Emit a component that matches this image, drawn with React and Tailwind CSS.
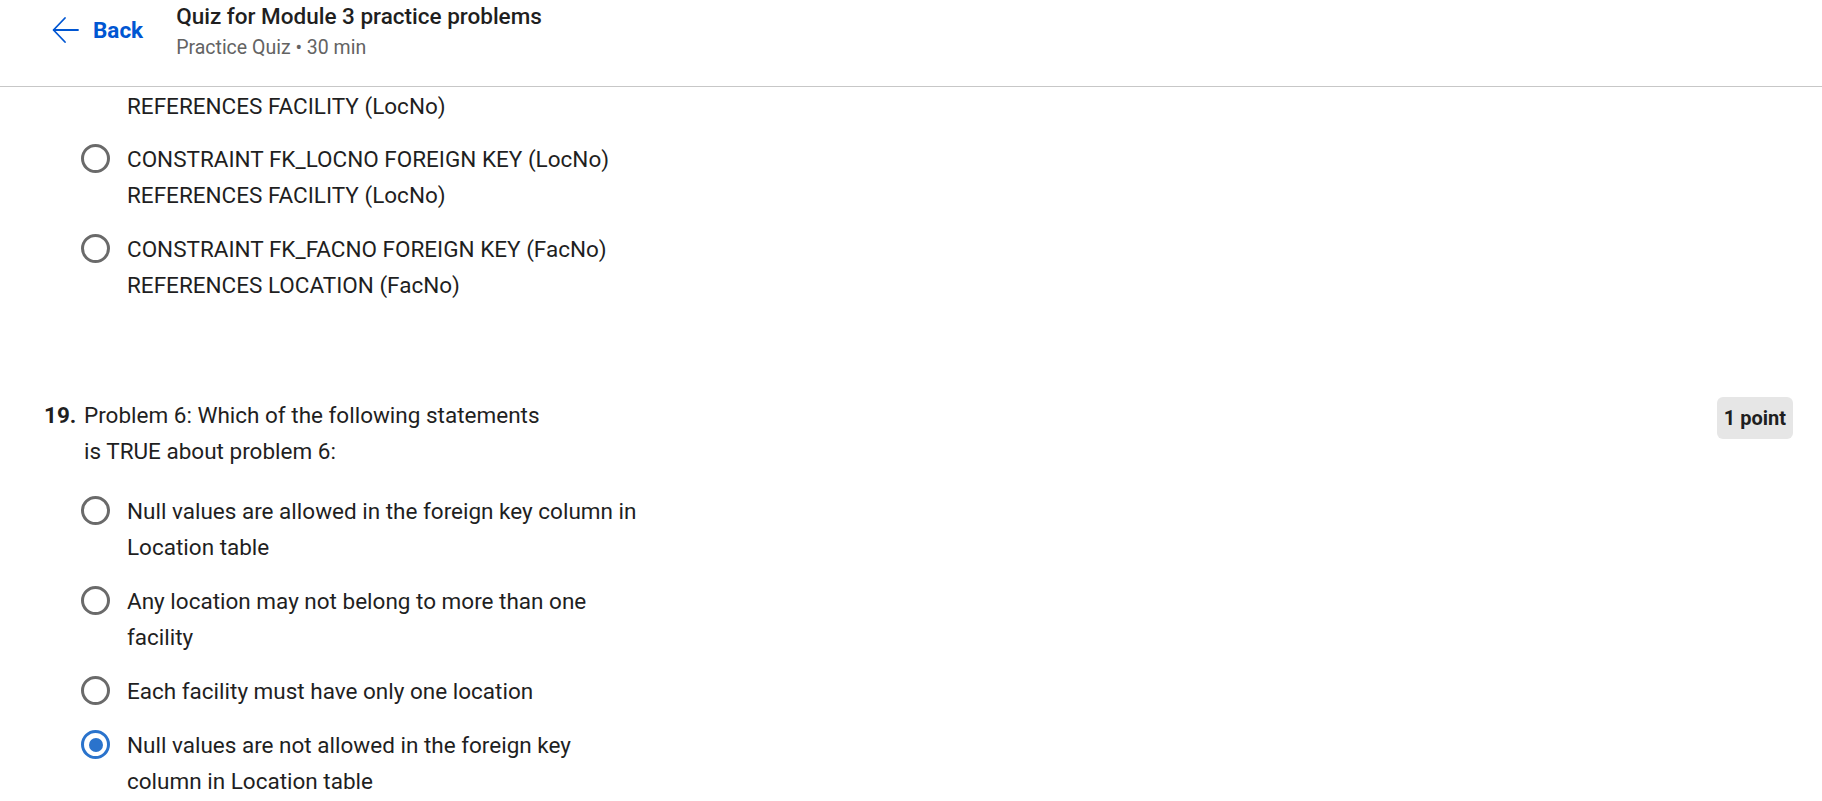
import React from 'react'

const Radio = ({ checked }) => (
  <div className='shrink-0 mt-[3px] size-[29px]'>
    {checked ? (
      <div className='size-[29px] rounded-full border-[3px] border-[#2a73cc] flex items-center justify-center'>
        <div className='size-[14px] rounded-full bg-[#2a73cc]' />
      </div>
    ) : (
      <div className='size-[29px] rounded-full border-[3px] border-[#6a6a6a]' />
    )}
  </div>
)

const Option = ({ lines, checked }) => (
  <div className='flex items-start pl-[81px] gap-[17px]'>
    <Radio checked={checked} />
    <div className='text-[22.5px] leading-[36px] text-[#1f1f1f] whitespace-nowrap'>
      {lines.map((l, i) => (
        <div key={i}>{l}</div>
      ))}
    </div>
  </div>
)

const prevOptions = [
  { lines: ['CONSTRAINT FK_LOCNO FOREIGN KEY (LocNo)', 'REFERENCES FACILITY (LocNo)'] },
  { lines: ['CONSTRAINT FK_FACNO FOREIGN KEY (FacNo)', 'REFERENCES LOCATION (FacNo)'] },
]

const options = [
  { lines: ['Null values are allowed in the foreign key column in', 'Location table'] },
  { lines: ['Any location may not belong to more than one', 'facility'] },
  { lines: ['Each facility must have only one location'] },
  { lines: ['Null values are not allowed in the foreign key', 'column in Location table'], checked: true },
]

export default function App() {
  return (
    <div className='w-full h-[801px] overflow-hidden bg-white text-[#1f1f1f] font-["Roboto","Noto_Sans",sans-serif]'>
      {/* header */}
      <header className='h-[87px] border-b border-[#c7c7c7] flex items-start'>
        <button className='flex items-center gap-[14px] ml-[52px] mt-[14px] h-[32px] text-[#0056d2]'>
          <svg width='27' height='30' viewBox='0 0 27 30' fill='none' stroke='currentColor' strokeWidth='1.8' strokeLinecap='round' strokeLinejoin='round'>
            <path d='M26 15H2' />
            <path d='M13 3L1.5 15L13 27' />
          </svg>
          <span className='text-[22.5px] font-bold leading-[32px]'>Back</span>
        </button>
        <div className='ml-[33px] flex flex-col'>
          <h1 className='text-[22.5px] font-medium leading-[32px] text-[#1f1f1f]'>Quiz for Module 3 practice problems</h1>
          <p className='text-[19.5px] leading-[32px] text-[#636363]'>Practice Quiz • 30 min</p>
        </div>
      </header>

      {/* tail of previous question */}
      <div className='pt-[1px]'>
        <div className='pl-[127px] text-[22.5px] leading-[36px] whitespace-nowrap'>REFERENCES FACILITY (LocNo)</div>
        <div className='flex flex-col gap-[18px] mt-[17px]'>
          {prevOptions.map((o, i) => (
            <Option key={i} lines={o.lines} />
          ))}
        </div>
      </div>

      {/* question 19 */}
      <section className='mt-[94px]'>
        <div className='flex items-start justify-between pl-[44px] pr-[29px]'>
          <div className='flex items-start text-[22.5px] leading-[36px]'>
            <span className='w-[40px] font-bold'>19.</span>
            <div className='whitespace-nowrap'>
              <div>Problem 6: Which of the following statements</div>
              <div>is TRUE about problem 6:</div>
            </div>
          </div>
          <div className='h-[42px] px-[7px] rounded-md bg-[#e6e6e6] flex items-center text-[20px] font-bold'>1 point</div>
        </div>
        <div className='flex flex-col gap-[18px] mt-[24px]'>
          {options.map((o, i) => (
            <Option key={i} lines={o.lines} checked={o.checked} />
          ))}
        </div>
      </section>
    </div>
  )
}
